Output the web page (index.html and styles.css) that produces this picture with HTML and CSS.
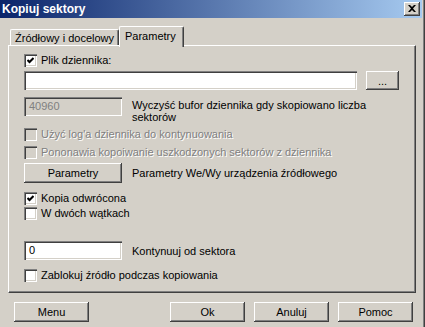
FILE: index.html
```html
<!DOCTYPE html>
<html lang="pl">
<head>
<meta charset="utf-8">
<title>Kopiuj sektory</title>
<link rel="stylesheet" href="styles.css">
</head>
<body>
<div class="window">
  <div class="titlebar">
    <span class="title">Kopiuj sektory</span>
    <span class="close"><svg width="8" height="7" viewBox="0 0 8 7"><path d="M0 0h2l2 2 2-2h2L5 3.5 8 7H6L4 5 2 7H0l3-3.5z" fill="#000"/></svg></span>
  </div>
  <div class="client">
    <div class="tabs">
      <div class="tab">Źródłowy i docelowy</div>
      <div class="tab active">Parametry</div>
    </div>
    <div class="panel">
      <div class="check r-log"><span class="box"><svg class="mark" width="7" height="7" viewBox="0 0 7 7"><polyline points="0.5,3 2.5,5 6.5,1" fill="none" stroke="#000" stroke-width="2"/></svg></span><span>Plik dziennika:</span></div>
      <div class="row r-file"><span class="edit wide"></span><span class="btn dots">...</span></div>
      <div class="row top r-buf"><span class="edit small disabled">40960</span><span class="desc">Wyczyść bufor dziennika gdy skopiowano liczba<br>sektorów</span></div>
      <div class="check disabled r-use"><span class="box"></span><span>Użyć log'a dziennika do kontynuowania</span></div>
      <div class="check disabled r-retry"><span class="box"></span><span>Pononawia kopoiwanie uszkodzonych sektorów z dziennika</span></div>
      <div class="row r-params"><span class="btn small">Parametry</span><span class="desc">Parametry We/Wy urządzenia źródłowego</span></div>
      <div class="check r-rev"><span class="box"><svg class="mark" width="7" height="7" viewBox="0 0 7 7"><polyline points="0.5,3 2.5,5 6.5,1" fill="none" stroke="#000" stroke-width="2"/></svg></span><span>Kopia odwrócona</span></div>
      <div class="check r-two"><span class="box"></span><span>W dwóch wątkach</span></div>
      <div class="row r-cont"><span class="edit small">0</span><span class="desc">Kontynuuj od sektora</span></div>
      <div class="check r-lock"><span class="box"></span><span>Zablokuj źródło podczas kopiowania</span></div>
    </div>
    <div class="footer">
      <span class="btn foot">Menu</span>
      <span class="spacer"></span>
      <span class="btn foot">Ok</span>
      <span class="btn foot">Anuluj</span>
      <span class="btn foot">Pomoc</span>
    </div>
  </div>
</div>
</body>
</html>
```
FILE: styles.css
```css
* { box-sizing: border-box; }
body {
  margin: 0;
  font: 11px "Liberation Sans", Arial, sans-serif;
  color: #000;
  background: #d4d0c8;
}
.window {
  width: 425px;
  height: 327px;
  background: #d4d0c8;
  padding-right: 3px;
  box-shadow: inset -1px 0 #404040, inset -2px 0 #808080;
  display: flex;
  flex-direction: column;
  overflow: hidden;
}
.titlebar {
  height: 18px;
  flex: none;
  background: linear-gradient(to right, #0a246a, #a6caf0);
  display: flex;
  align-items: center;
  justify-content: space-between;
  padding: 0 2px 0 2px;
}
.title {
  color: #fff;
  font-weight: bold;
  font-size: 12px;
  line-height: 13px;
}
.close {
  width: 16px;
  height: 14px;
  background: #d4d0c8;
  box-shadow: inset -1px -1px #404040, inset 1px 1px #fff, inset -2px -2px #808080;
  display: flex;
  align-items: center;
  justify-content: center;
  padding-bottom: 1px;
}
.close svg { display: block; }
.client {
  flex: 1;
  display: flex;
  flex-direction: column;
  padding: 8px 6px 0 8px;
}
.tabs {
  display: flex;
  align-items: flex-start;
  height: 19px;
  padding-left: 2px;
  position: relative;
  z-index: 1;
}
.tab {
  height: 16px;
  margin-top: 3px;
  width: 109px;
  border-top: 1px solid #fff;
  border-left: 1px solid #fff;
  border-right: 1px solid #404040;
  border-radius: 2px 2px 0 0;
  box-shadow: inset -1px 0 #808080;
  padding: 2px 0 0 4px;
  line-height: 13px;
  white-space: nowrap;
  background: #d4d0c8;
}
.tab.active {
  width: 65px;
  height: 21px;
  margin-top: 0;
  padding: 3px 0 0 5px;
}
.panel {
  height: 248px;
  border: 1px solid;
  border-color: #fff #404040 #404040 #fff;
  box-shadow: inset -1px -1px #808080;
  padding: 0 0 0 15px;
  display: flex;
  flex-direction: column;
  align-items: flex-start;
}
.row {
  display: flex;
  align-items: center;
}
.row.top { align-items: flex-start; }
.check {
  display: flex;
  align-items: center;
  height: 13px;
  line-height: 13px;
  white-space: nowrap;
}
.box {
  width: 13px;
  height: 13px;
  background: #fff;
  box-shadow: inset 1px 1px #808080, inset 2px 2px #404040, inset -1px -1px #fff, inset -2px -2px #d4d0c8;
  margin-right: 4px;
  padding: 3px;
  flex: none;
}
.mark { display: block; }
.check.disabled .box { background: #d4d0c8; }
.check.disabled span:last-child {
  color: #808080;
  text-shadow: 1px 1px #fff;
}
.edit {
  height: 19px;
  background: #fff;
  box-shadow: inset 1px 1px #808080, inset 2px 2px #404040, inset -1px -1px #fff, inset -2px -2px #d4d0c8;
  padding: 3px 0 0 5px;
  line-height: 13px;
}
.edit.wide { width: 333px; }
.edit.small { width: 98px; }
.edit.disabled { background: #d4d0c8; color: #808080; }
.btn {
  display: flex;
  align-items: center;
  justify-content: center;
  background: #d4d0c8;
  box-shadow: inset -1px -1px #404040, inset 1px 1px #fff, inset -2px -2px #808080;
  line-height: 13px;
}
.btn.dots {
  width: 33px;
  height: 19px;
  margin-left: 9px;
  padding-top: 2px;
}
.btn.small {
  width: 98px;
  height: 20px;
}
.desc {
  margin-left: 10px;
  line-height: 12px;
  white-space: nowrap;
}
.r-buf .desc { margin-top: 2px; }
.r-log { margin-top: 8px; }
.r-file { margin-top: 4px; }
.r-buf { margin-top: 7px; }
.r-use { margin-top: 5px; }
.r-retry { margin-top: 5px; }
.r-params { margin-top: 4px; }
.r-rev { margin-top: 9px; }
.r-two { margin-top: 2px; }
.r-cont { margin-top: 21px; }
.r-lock { margin-top: 9px; }
.footer {
  display: flex;
  margin-top: 9px;
  padding: 0 3px 0 6px;
  gap: 9px;
}
.spacer { flex: 1; }
.btn.foot {
  width: 75px;
  height: 20px;
}
```
